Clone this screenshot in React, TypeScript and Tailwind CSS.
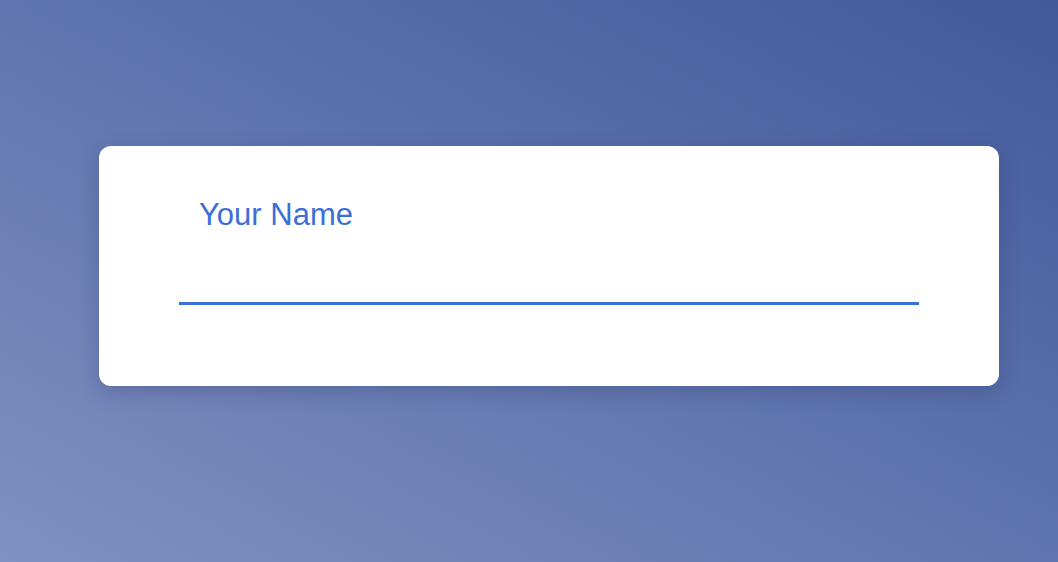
export default function App() {
  return (
    <div className="w-[1058px] h-[562px] bg-linear-to-tr from-[#7f91c2] to-[#42599a] pl-[99px] pt-[146px] font-['Liberation_Sans',Arial,sans-serif]">
      <div className="w-[900px] rounded-[12px] bg-white px-[80px] pt-[54px] pb-[81px] shadow-[0_6px_20px_rgba(30,40,90,0.25)]">
        <label className="block pl-[20px] text-[31px] leading-[30px] text-[#3c6ed8]">Your Name</label>
        <input
          type="text"
          className="block w-full h-[75px] border-b-[3px] border-[#3c6ed8] bg-transparent outline-none"
        />
      </div>
    </div>
  )
}
